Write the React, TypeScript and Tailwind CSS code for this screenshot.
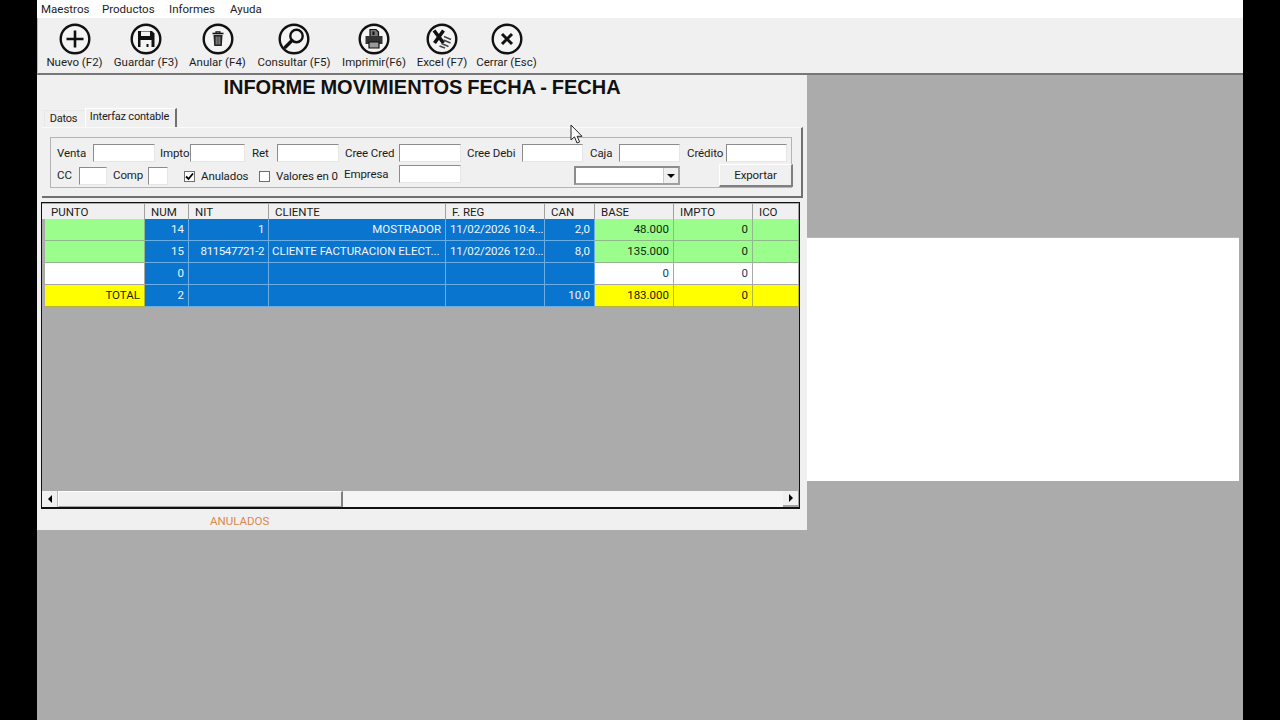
import type { ReactNode } from "react";

const inputCls =
  "shrink-0 h-[18px] bg-white border border-t-[#8c8c8c] border-l-[#8c8c8c] border-r-[#e6e6e6] border-b-[#e6e6e6]";

function Ring({ children }: { children: ReactNode }) {
  return (
    <svg width="32" height="32" viewBox="0 0 32 32" fill="none" stroke="#111" className="block">
      <circle cx="16" cy="16" r="14.3" strokeWidth="2.4" fill="#f4f4f4" />
      {children}
    </svg>
  );
}

const icons: Record<string, ReactNode> = {
  nuevo: (
    <Ring>
      <path d="M16 7.5v17M7.5 16h17" strokeWidth="2.6" />
    </Ring>
  ),
  guardar: (
    <Ring>
      <path d="M8 8h14l2.5 2.5V24H8z" fill="#111" stroke="none" />
      <path d="M11 8.5h9v4.5h-9z" fill="#f4f4f4" stroke="none" />
      <path d="M10.5 17h11v7h-11z" fill="#f4f4f4" stroke="none" />
      <path d="M16.5 21h2v3h-2z" fill="#111" stroke="none" />
    </Ring>
  ),
  anular: (
    <Ring>
      <path d="M10.5 10.5h11" strokeWidth="1.6" />
      <path d="M14 10V8.8h4V10" strokeWidth="1.2" />
      <path d="M11.5 12h9l-.7 11h-7.6z" fill="#222" stroke="none" />
      <path d="M14.2 13.5v8M16 13.5v8M17.8 13.5v8" stroke="#bbb" strokeWidth=".8" />
    </Ring>
  ),
  consultar: (
    <Ring>
      <circle cx="18.5" cy="13" r="6.2" strokeWidth="2.4" />
      <path d="M14 17.5 7.5 24" strokeWidth="3.4" strokeLinecap="round" />
    </Ring>
  ),
  imprimir: (
    <Ring>
      <path d="M12 6.5h6l2.5 2.5v5H12z" fill="#777" stroke="#111" strokeWidth="1.2" />
      <path d="M7.5 13h17v8h-17z" fill="#333" stroke="none" />
      <path d="M11 19h10v6H11z" fill="#999" stroke="#111" strokeWidth="1.2" />
      <path d="M14.5 8.5h2v3.5h-2z" fill="#111" stroke="none" />
    </Ring>
  ),
  excel: (
    <Ring>
      <path d="M8 7.5 17.5 20M17.5 7.5 8.5 20" strokeWidth="3.6" />
      <path d="M18 13.5l7 3M17.5 17l7 3M15.5 20.5l7 3M13.5 23l5.5 2" stroke="#444" strokeWidth="1.4" />
    </Ring>
  ),
  cerrar: (
    <Ring>
      <path d="M11 11l10 10M21 11 11 21" strokeWidth="3" />
    </Ring>
  ),
};

const tools = [
  { id: "nuevo", label: "Nuevo (F2)", w: "w-[57px]", ml: "ml-[8px]" },
  { id: "guardar", label: "Guardar (F3)", w: "w-[64px]", ml: "ml-[11px]" },
  { id: "anular", label: "Anular (F4)", w: "w-[57px]", ml: "ml-[11px]" },
  { id: "consultar", label: "Consultar (F5)", w: "w-[72px]", ml: "ml-[12px]" },
  { id: "imprimir", label: "Imprimir(F6)", w: "w-[66px]", ml: "ml-[11px]" },
  { id: "excel", label: "Excel (F7)", w: "w-[48px]", ml: "ml-[11px]" },
  { id: "cerrar", label: "Cerrar (Esc)", w: "w-[59px]", ml: "ml-[11px]" },
];

const gridCols = "grid grid-cols-[100px_44px_80px_177px_99px_50px_79px_79px_46px]";

const tones = {
  blue: "bg-[#0a75cf] text-[#eef6fc] border-[#6aaee6]",
  green: "bg-[#9bfd8b] text-[#0b2b10] border-[#8fb98a]",
  white: "bg-white text-[#17405f] border-[#a8a8a8]",
  yellow: "bg-[#ffff00] text-[#222200] border-[#b5b53c]",
};

type Tone = keyof typeof tones;

const rows: [string, Tone][][] = [
  [
    ["", "green"],
    ["14", "blue"],
    ["1", "blue"],
    ["MOSTRADOR", "blue"],
    ["11/02/2026 10:4...", "blue"],
    ["2,0", "blue"],
    ["48.000", "green"],
    ["0", "green"],
    ["", "green"],
  ],
  [
    ["", "green"],
    ["15", "blue"],
    ["811547721-2", "blue"],
    ["CLIENTE FACTURACION ELECT...", "blue"],
    ["11/02/2026 12:0...", "blue"],
    ["8,0", "blue"],
    ["135.000", "green"],
    ["0", "green"],
    ["", "green"],
  ],
  [
    ["", "white"],
    ["0", "blue"],
    ["", "blue"],
    ["", "blue"],
    ["", "blue"],
    ["", "blue"],
    ["0", "white"],
    ["0", "white"],
    ["", "white"],
  ],
  [
    ["TOTAL", "yellow"],
    ["2", "blue"],
    ["", "blue"],
    ["", "blue"],
    ["", "blue"],
    ["10,0", "blue"],
    ["183.000", "yellow"],
    ["0", "yellow"],
    ["", "yellow"],
  ],
];

const headers = ["PUNTO", "NUM", "NIT", "CLIENTE", "F. REG", "CAN", "BASE", "IMPTO", "ICO"];

function Check({ checked, className }: { checked?: boolean; className: string }) {
  return (
    <div
      className={`shrink-0 w-[11px] h-[11px] mt-[1px] bg-white border border-[#6e6e6e] flex items-center justify-center ${className}`}
    >
      {checked && (
        <svg width="9" height="9" viewBox="0 0 9 9" fill="none" stroke="#000" strokeWidth="1.8">
          <path d="M1 4.5 3.5 7 8 1.5" />
        </svg>
      )}
    </div>
  );
}

function Field({ label, labelW, inputW, ml }: { label: string; labelW: string; inputW: string; ml: string }) {
  return (
    <>
      <span className={`${labelW} ${ml} shrink-0 whitespace-nowrap pt-[1px] tracking-[-0.1px]`}>{label}</span>
      <div className={`${inputCls} ${inputW}`} />
    </>
  );
}

export default function App() {
  return (
    <div
      className="relative w-[1280px] h-screen overflow-hidden bg-black flex justify-center text-[11.5px] text-[#1c1c1c]"
      style={{ fontFamily: "Roboto, 'Liberation Sans', sans-serif" }}
    >
      <div className="w-[1206px] h-full flex flex-col bg-[#ababab]">
        <div className="h-[18px] bg-white flex items-center pt-[1px] pl-[4px] shrink-0">
          <span className="w-[61px]">Maestros</span>
          <span className="w-[67px]">Productos</span>
          <span className="w-[61px]">Informes</span>
          <span>Ayuda</span>
        </div>
        <div className="h-[57px] shrink-0 bg-[#f0f0f0] border-b-2 border-[#777] flex border-l border-l-[#bbb]">
          {tools.map((t) => (
            <div key={t.id} className={`${t.w} ${t.ml} shrink-0 flex flex-col items-center pt-[5px]`}>
              {icons[t.id]}
              <span className="whitespace-nowrap leading-[14px]">{t.label}</span>
            </div>
          ))}
        </div>
        <div className="flex-1 flex">
          <div className="w-[770px] h-[455px] bg-[#f0f0f0] flex flex-col">
            <h1
              className="h-[25px] text-center text-[20px] font-bold leading-[25px] text-[#111] [word-spacing:-0.7px] whitespace-nowrap"
              style={{ fontFamily: "'Liberation Sans', sans-serif" }}
            >
              INFORME MOVIMIENTOS FECHA - FECHA
            </h1>
            <div className="flex items-end h-[19px] mt-[8px] ml-[7px]">
              <div className="w-[41px] h-[17px] flex items-center justify-center pr-[3px] text-[11px] tracking-[-0.2px] border-t border-l border-[#e8e8e8]">
                Datos
              </div>
              <div className="w-[92px] h-[19px] flex items-center justify-center pb-[1px] pr-[2px] text-[11px] tracking-[-0.2px] whitespace-nowrap bg-[#f0f0f0] border-t border-l border-t-white border-l-white border-r-2 border-r-[#707070]">
                Interfaz contable
              </div>
            </div>
            <div className="ml-[5px] w-[761px] h-[71px] border-t border-t-[#fafafa] border-r-2 border-r-[#707070] border-b-2 border-b-[#707070] pl-[8px] pt-[9px]">
              <div className="w-[742px] h-[51px] border border-[#b4b4b4] pl-[6px] pt-[6px]">
                <div className="flex items-center h-[18px]">
                  <Field label="Venta" labelW="w-[36px]" inputW="w-[62px]" ml="ml-0" />
                  <Field label="Impto" labelW="w-[30px]" inputW="w-[55px]" ml="ml-[5px]" />
                  <Field label="Ret" labelW="w-[25px]" inputW="w-[62px]" ml="ml-[7px]" />
                  <Field label="Cree Cred" labelW="w-[54px]" inputW="w-[62px]" ml="ml-[6px]" />
                  <Field label="Cree Debi" labelW="w-[55px]" inputW="w-[61px]" ml="ml-[6px]" />
                  <Field label="Caja" labelW="w-[29px]" inputW="w-[61px]" ml="ml-[7px]" />
                  <Field label="Crédito" labelW="w-[39px]" inputW="w-[61px]" ml="ml-[7px]" />
                </div>
                <div className="flex items-center h-[23px] mt-[2px]">
                  <Field label="CC" labelW="w-[22px]" inputW="w-[28px]" ml="ml-0" />
                  <Field label="Comp" labelW="w-[35px]" inputW="w-[20px]" ml="ml-[6px]" />
                  <Check checked className="ml-[16px]" />
                  <span className="ml-[6px] w-[58px] shrink-0 pt-[2px] tracking-[-0.1px]">Anulados</span>
                  <Check className="" />
                  <span className="ml-[6px] w-[68px] shrink-0 whitespace-nowrap pt-[2px] tracking-[-0.1px]">Valores en 0</span>
                  <span className="w-[55px] shrink-0 -mt-[1px] tracking-[-0.1px]">Empresa</span>
                  <div className={`${inputCls} w-[62px] -mt-[3px]`} />
                  <div className="ml-[113px] w-[106px] h-[19px] shrink-0 bg-white border-2 border-t-[#8c8c8c] border-l-[#8c8c8c] border-r-[#a0a0a0] border-b-[#a0a0a0] flex justify-end">
                    <div className="w-[15px] h-full bg-[#f0f0f0] border-l border-[#ccc] flex items-center justify-center">
                      <div className="w-0 h-0 border-x-[4px] border-x-transparent border-t-[4px] border-t-black" />
                    </div>
                  </div>
                  <button className="ml-[39px] w-[74px] h-[23px] shrink-0 pt-[1px] tracking-[-0.1px] bg-[#f0f0f0] border border-t-white border-l-white border-r-2 border-b-2 border-r-[#808080] border-b-[#808080]">
                    Exportar
                  </button>
                </div>
              </div>
            </div>
            <div className="ml-[4px] mt-[4px] w-[759px] h-[307px] border border-[#111] border-b-2 pt-[1px] bg-[#ababab] flex flex-col shrink-0">
              <div className={`${gridCols} h-[15px] bg-[#f0f0f0] pl-[3px]`}>
                {headers.map((h) => (
                  <div key={h} className="pl-[6px] pt-[1px] leading-[15px] border-r border-[#a0a0a0] whitespace-nowrap">
                    {h}
                  </div>
                ))}
              </div>
              {rows.map((row, i) => (
                <div key={i} className={`${gridCols} h-[22px] pl-[3px] bg-[#ababab]`}>
                  {row.map(([text, tone], j) => (
                    <div
                      key={j}
                      className={`${tones[tone]} border-r border-b flex items-center whitespace-nowrap overflow-hidden ${
                        j === 2 ? "tracking-[-0.4px] " : ""
                      }${j === 4 ? "justify-start pl-[4px] tracking-[-0.1px]" : j === 3 && i === 1 ? "justify-start pl-[3px]" : "justify-end pr-[4px]"}`}
                    >
                      {text}
                    </div>
                  ))}
                </div>
              ))}
              <div className="mt-auto h-[16px] flex bg-[#f5f5f5]">
                <div className="w-[16px] bg-[#f0f0f0] border-r border-[#bbb] flex items-center justify-center">
                  <div className="w-0 h-0 border-y-[4px] border-y-transparent border-r-[4px] border-r-black" />
                </div>
                <div className="w-[285px] bg-[#f0f0f0] border border-t-white border-l-white border-r-2 border-r-[#808080] border-b-[#a0a0a0]" />
                <div className="flex-1" />
                <div className="w-[16px] bg-[#f0f0f0] border-b-2 border-r border-[#a0a0a0] flex items-center justify-center">
                  <div className="w-0 h-0 border-y-[4px] border-y-transparent border-l-[4px] border-l-black" />
                </div>
              </div>
            </div>
            <div className="ml-[173px] mt-[5px] text-[#d98a4c] leading-[14px]">ANULADOS</div>
          </div>
          <div className="w-[432px] h-[244px] mt-[162px] bg-white border-t border-t-[#b8b8b8]" />
        </div>
      </div>
      <svg
        width="14"
        height="21"
        viewBox="0 0 14 21"
        className="absolute left-[570px] top-[124px]"
        fill="#fff"
        stroke="#222"
        strokeWidth="1"
      >
        <path d="M1 1v15l3.5-3.2L7 19l2.6-1.1-2.5-5.6H12z" />
      </svg>
    </div>
  );
}
